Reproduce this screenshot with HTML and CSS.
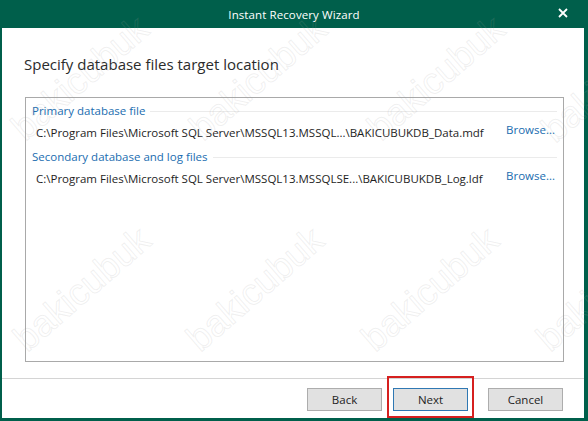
FILE: index.html
```html
<!DOCTYPE html>
<html>
<head>
	<title>Instant Recovery Wizard</title>
	<link rel="stylesheet" href="styles.css">
</head>
<body>
	<div class="window">
		<div class="titlebar">
			<span class="title">Instant Recovery Wizard</span>
			<svg class="close" width="10" height="10" viewBox="0 0 10 10">
				<path d="M1 1 L9 9 M9 1 L1 9" stroke="#fff" stroke-width="1.8" fill="none" />
			</svg>
		</div>
		<div class="frame">
			<h1 class="heading">Specify database files target location</h1>
			<div class="panel">
				<div class="group">
					<div class="group-label">Primary database file</div>
					<div class="file-row">
						<span class="path">C:\Program Files\Microsoft SQL Server\MSSQL13.MSSQL...\BAKICUBUKDB_Data.mdf</span>
						<a class="browse">Browse...</a>
					</div>
				</div>
				<div class="group">
					<div class="group-label">Secondary database and log files</div>
					<div class="file-row">
						<span class="path">C:\Program Files\Microsoft SQL Server\MSSQL13.MSSQLSE...\BAKICUBUKDB_Log.ldf</span>
						<a class="browse">Browse...</a>
					</div>
				</div>
			</div>
			<div class="separator"></div>
			<div class="footer">
				<button type="button" class="button back">Back</button>
				<button type="button" class="button default next">Next<span class="highlight"></span></button>
				<button type="button" class="button">Cancel</button>
			</div>
		</div>
	</div>

	<div class="watermarks">
		<span class="mark" style="left: 80px; top: 78px;">bakicubuk</span>
		<span class="mark" style="left: 258px; top: 78px;">bakicubuk</span>
		<span class="mark" style="left: 436px; top: 78px;">bakicubuk</span>
		<span class="mark" style="left: 610px; top: 80px;">bakicubuk</span>
		<span class="mark" style="left: 82px; top: 289px;">bakicubuk</span>
		<span class="mark" style="left: 255px; top: 289px;">bakicubuk</span>
		<span class="mark" style="left: 430px; top: 289px;">bakicubuk</span>
		<span class="mark" style="left: 605px; top: 289px;">bakicubuk</span>
	</div>
</body>
</html>
```

FILE: styles.css
```css
* {
	box-sizing: border-box;
}

body {
	margin: 0;
	font-family: "Open Sans", "Noto Sans", sans-serif;
	font-size: 11.5px;
	color: #1e1e1e;
	overflow: hidden;
}

.window {
	width: 588px;
	height: 421px;
	display: flex;
	flex-direction: column;
	background-color: #fff;
}

.titlebar {
	height: 28px;
	flex: none;
	background-color: #005f4b;
	color: #fff;
	display: flex;
	align-items: center;
	justify-content: center;
	position: relative;
}

	.titlebar .title {
		font-size: 11.5px;
		letter-spacing: 0.1px;
	}

	.titlebar .close {
		position: absolute;
		right: 20px;
		top: 8px;
	}

.frame {
	flex: 1;
	display: flex;
	flex-direction: column;
	border-left: 2px solid #005f4b;
	border-right: 4px solid #005f4b;
	border-bottom: 3px solid #005f4b;
}

.heading {
	font-size: 15px;
	font-weight: normal;
	line-height: 20px;
	color: #2b2b2b;
	margin: 26px 0 23px 22px;
}

.panel {
	width: 539px;
	height: 265px;
	margin-left: 23px;
	border: 1px solid #a9a9a9;
	padding: 5px 6px 0 6px;
}

.group + .group {
	margin-top: 8px;
}

.group-label {
	display: flex;
	align-items: center;
	line-height: 16px;
	color: #1a6db0;
}

	.group-label::after {
		content: "";
		flex: 1;
		height: 1px;
		margin-left: 5px;
		background-color: #ebebeb;
	}

.file-row {
	display: flex;
	align-items: flex-start;
	margin-top: 3px;
	line-height: 16px;
}

	.file-row .path {
		flex: 1;
		padding: 3px 0 0 4px;
		white-space: nowrap;
	}

	.file-row .browse {
		color: #1a6db0;
		margin-right: 2px;
		cursor: pointer;
	}

.separator {
	height: 1px;
	margin-top: 16px;
	background-color: #d4d4d4;
}

.footer {
	display: flex;
	justify-content: flex-end;
	padding: 9px 21px 0 0;
}

.button {
	font-family: inherit;
	font-size: 11.5px;
	color: #1e1e1e;
	width: 75px;
	height: 23px;
	padding: 0;
	border: 1px solid #adadad;
	background-color: #e1e1e1;
	position: relative;
}

	.button.default {
		border-color: #2f78b3;
	}

.back {
	margin-right: 11px;
}

.next {
	margin-right: 20px;
}

.highlight {
	position: absolute;
	left: -7px;
	right: -7px;
	top: -13px;
	bottom: -8px;
	border: 2px solid #d6201f;
	pointer-events: none;
}

.watermarks {
	position: absolute;
	left: 0;
	top: 0;
	width: 588px;
	height: 421px;
	overflow: hidden;
	pointer-events: none;
}

.mark {
	position: absolute;
	font-family: "Liberation Sans", sans-serif;
	font-size: 37px;
	line-height: 37px;
	color: transparent;
	-webkit-text-stroke: 1px rgba(160, 160, 160, 0.17);
	transform: translate(-50%, -50%) rotate(-41deg);
	white-space: nowrap;
}
```
